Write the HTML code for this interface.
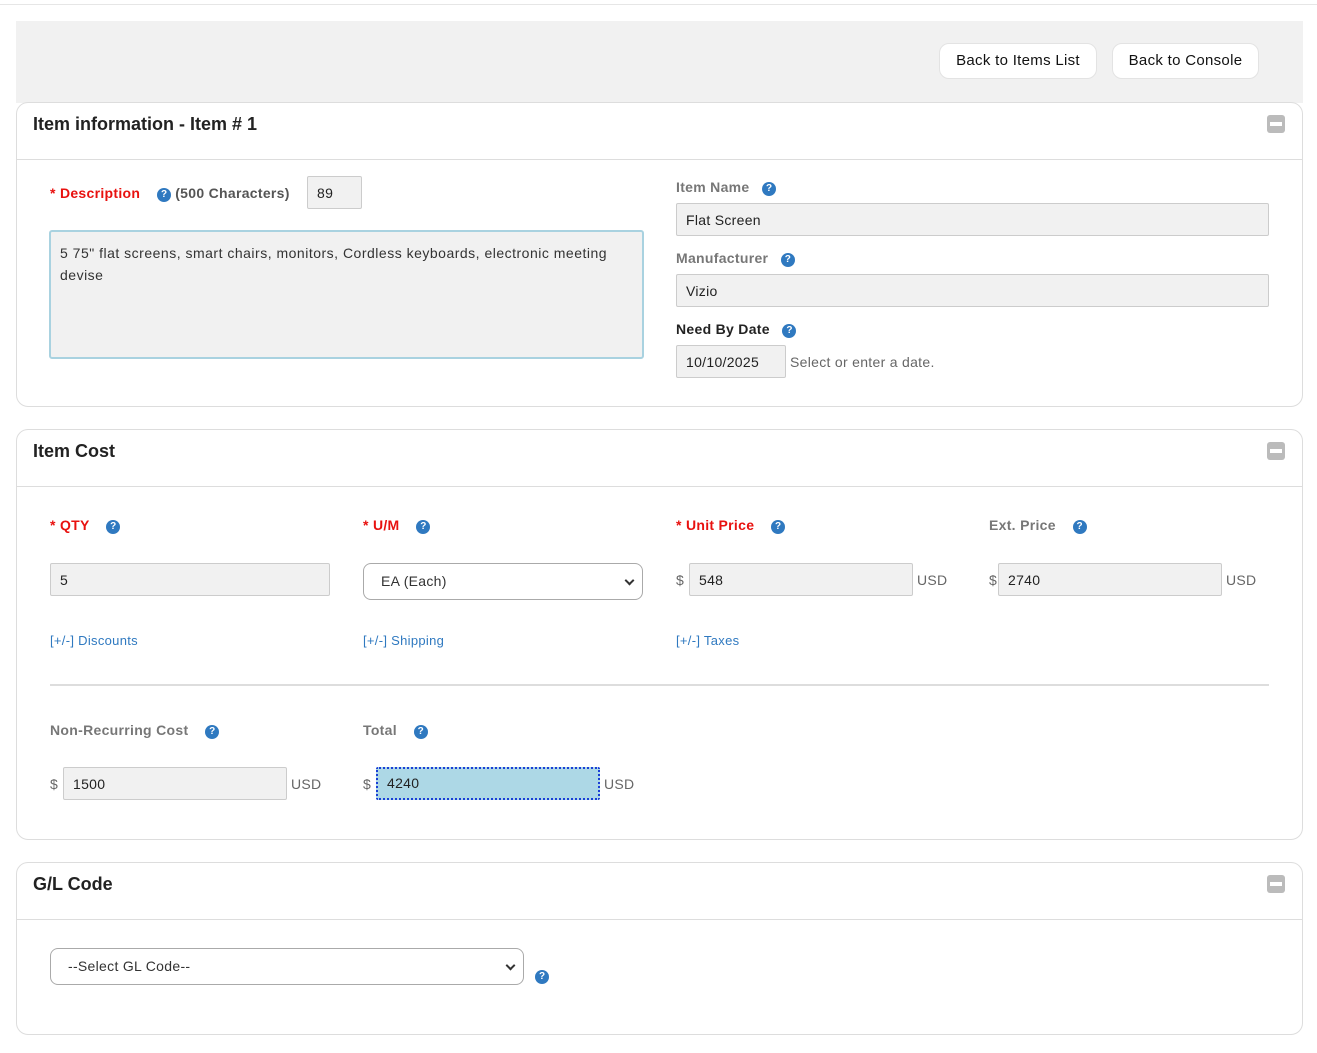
<!DOCTYPE html>
<html><head><style>
*{box-sizing:border-box;margin:0;padding:0}
body{width:1317px;height:1053px;background:#fff;font-family:"Liberation Sans",sans-serif;font-size:14px;color:#333;position:relative;overflow:hidden;letter-spacing:0.3px}
.a{position:absolute}
.topline{left:0;top:4px;width:1317px;height:1px;background:#e6e6e6}
.bar{left:16px;top:21px;width:1287px;height:82px;background:#f1f1f1}
.btn{top:43px;height:36px;background:#fff;border:1px solid #e3e3e3;border-radius:10px;font-size:15px;color:#111;line-height:34px;text-align:center}
.panel{left:16px;width:1287px;border:1px solid #ddd;border-radius:12px;background:#fff}
.hd{left:0;width:100%;height:57px;border-bottom:1px solid #ddd}
.ttl{left:16px;top:11px;font-size:18px;font-weight:bold;color:#222;letter-spacing:0}
.col{right:17px;top:12px;width:18px;height:18px;background:#bbb;border-radius:3px}
.col:after{content:"";position:absolute;left:3px;top:7px;width:12px;height:4px;background:#fff}
.lbl{font-weight:bold;font-size:14px;color:#777}
.req{color:#e8110f}
.q{display:inline-block;width:14px;height:14px;border-radius:50%;background:#2f79c0;color:#fff;font-size:10px;font-weight:bold;text-align:center;line-height:14px;vertical-align:1px;letter-spacing:0}
.inp{height:33px;background:#f1f1f1;border:1px solid #ccc;border-radius:2px;padding-left:9px;line-height:33px;font-size:14px;color:#222}
.sel{height:37px;background:#fff;border:1px solid #aaa;border-radius:8px;padding-left:17px;line-height:35px;font-size:14px;color:#333}
.sel:after{content:"";position:absolute;right:9px;top:13px;width:5px;height:5px;border-right:2px solid #333;border-bottom:2px solid #333;transform:rotate(45deg)}
.t{font-size:14px;color:#666}
.lnk{font-size:13px;color:#2f79c0}
</style></head><body>
<div class="a topline"></div>
<div class="a bar"></div>
<div class="a btn" style="left:939px;width:158px">Back to Items List</div>
<div class="a btn" style="left:1112px;width:147px">Back to Console</div>

<div class="a panel" style="top:102px;height:305px">
 <div class="a hd"></div>
 <div class="a ttl">Item information - Item # 1</div>
 <div class="a col"></div>
</div>
<div class="a lbl req" style="left:50px;top:185px">* Description</div>
<div class="a lbl" style="left:157px;top:185px;color:#555"><span class="q">?</span> (500 Characters)</div>
<div class="a inp" style="left:307px;top:176px;width:55px;height:33px">89</div>
<div class="a" style="left:49px;top:230px;width:595px;height:129px;background:#f1f1f1;border:2px solid #a9d2e0;border-radius:3px;padding:10px 9px;font-size:14px;line-height:22px;color:#333;letter-spacing:0.5px">5 75" flat screens, smart chairs, monitors, Cordless keyboards, electronic meeting devise</div>
<div class="a lbl" style="left:676px;top:179px">Item Name &nbsp;&nbsp;<span class="q">?</span></div>
<div class="a inp" style="left:676px;top:203px;width:593px">Flat Screen</div>
<div class="a lbl" style="left:676px;top:250px">Manufacturer &nbsp;&nbsp;<span class="q">?</span></div>
<div class="a inp" style="left:676px;top:274px;width:593px">Vizio</div>
<div class="a lbl" style="left:676px;top:321px;color:#222">Need By Date &nbsp;&nbsp;<span class="q">?</span></div>
<div class="a inp" style="left:676px;top:345px;width:110px">10/10/2025</div>
<div class="a t" style="left:790px;top:354px">Select or enter a date.</div>

<div class="a panel" style="top:429px;height:411px">
 <div class="a hd"></div>
 <div class="a ttl">Item Cost</div>
 <div class="a col"></div>
</div>
<div class="a lbl req" style="left:50px;top:517px">* QTY &nbsp;&nbsp;&nbsp;<span class="q">?</span></div>
<div class="a lbl req" style="left:363px;top:517px">* U/M &nbsp;&nbsp;&nbsp;<span class="q">?</span></div>
<div class="a lbl req" style="left:676px;top:517px">* Unit Price &nbsp;&nbsp;&nbsp;<span class="q">?</span></div>
<div class="a lbl" style="left:989px;top:517px">Ext. Price &nbsp;&nbsp;&nbsp;<span class="q">?</span></div>
<div class="a inp" style="left:50px;top:563px;width:280px">5</div>
<div class="a sel" style="left:363px;top:563px;width:280px">EA (Each)</div>
<div class="a t" style="left:676px;top:572px">$</div>
<div class="a inp" style="left:689px;top:563px;width:224px">548</div>
<div class="a t" style="left:917px;top:572px">USD</div>
<div class="a t" style="left:989px;top:572px">$</div>
<div class="a inp" style="left:998px;top:563px;width:224px">2740</div>
<div class="a t" style="left:1226px;top:572px">USD</div>
<div class="a lnk" style="left:50px;top:633px">[+/-] Discounts</div>
<div class="a lnk" style="left:363px;top:633px">[+/-] Shipping</div>
<div class="a lnk" style="left:676px;top:633px">[+/-] Taxes</div>
<div class="a" style="left:50px;top:684px;width:1219px;height:2px;background:#ddd"></div>
<div class="a lbl" style="left:50px;top:722px">Non-Recurring Cost &nbsp;&nbsp;&nbsp;<span class="q">?</span></div>
<div class="a lbl" style="left:363px;top:722px">Total &nbsp;&nbsp;&nbsp;<span class="q">?</span></div>
<div class="a t" style="left:50px;top:776px">$</div>
<div class="a inp" style="left:63px;top:767px;width:224px">1500</div>
<div class="a t" style="left:291px;top:776px">USD</div>
<div class="a t" style="left:363px;top:776px">$</div>
<div class="a inp" style="left:376px;top:767px;width:224px;background:#add8e6;border:2px dotted #1a3fd6;line-height:29px">4240</div>
<div class="a t" style="left:604px;top:776px">USD</div>

<div class="a panel" style="top:862px;height:173px">
 <div class="a hd"></div>
 <div class="a ttl">G/L Code</div>
 <div class="a col"></div>
</div>
<div class="a sel" style="left:50px;top:948px;width:474px">--Select GL Code--</div>
<div class="a" style="left:535px;top:967px"><span class="q">?</span></div>
</body></html>
